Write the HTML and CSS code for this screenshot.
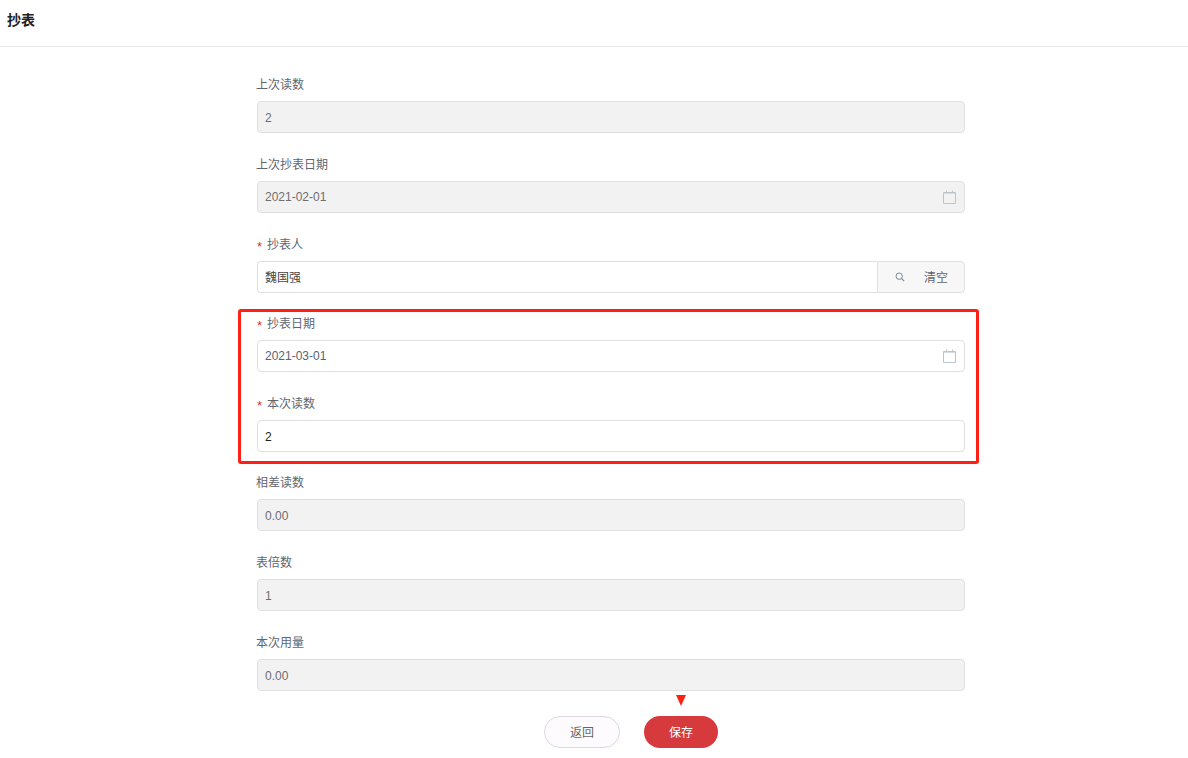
FILE: index.html
```html
<!DOCTYPE html>
<html lang="zh">
<head>
<meta charset="utf-8">
<title>抄表</title>
<link rel="stylesheet" href="styles.css">
</head>
<body>
<header class="page-header"><h1 class="page-title">抄表</h1></header>
<main class="form">
  <div class="field">
    <div class="label">上次读数</div>
    <div class="input disabled numeric">2</div>
  </div>
  <div class="field">
    <div class="label">上次抄表日期</div>
    <div class="input disabled"><span class="grow">2021-02-01</span>
      <svg class="cal" viewBox="0 0 13 14" width="13" height="14"><path d="M.5 2.5h12v11H.5zM3.5 .5v2M9.5 .5v2" fill="none" stroke="#bcc3cc"/><path d="M1 3.5h11" stroke="#d5dbe2"/></svg>
    </div>
  </div>
  <div class="field">
    <div class="label"><span class="star">*</span>抄表人</div>
    <div class="input-group">
      <div class="input joined">魏国强</div>
      <div class="addon">
        <svg class="search" viewBox="0 0 10 10" width="10" height="10"><circle cx="4.2" cy="4.2" r="3.2" fill="none" stroke="#7b8794"/><path d="M6.6 6.6l2.6 2.6" stroke="#7b8794" stroke-width="1.2"/></svg>
        <span class="clear">清空</span>
      </div>
    </div>
  </div>
  <div class="field">
    <div class="label"><span class="star">*</span>抄表日期</div>
    <div class="input"><span class="grow">2021-03-01</span>
      <svg class="cal" viewBox="0 0 13 14" width="13" height="14"><path d="M.5 2.5h12v11H.5zM3.5 .5v2M9.5 .5v2" fill="none" stroke="#bcc3cc"/><path d="M1 3.5h11" stroke="#d5dbe2"/></svg>
    </div>
  </div>
  <div class="field">
    <div class="label"><span class="star">*</span>本次读数</div>
    <div class="input strong numeric">2</div>
  </div>
  <div class="field">
    <div class="label">相差读数</div>
    <div class="input disabled numeric">0.00</div>
  </div>
  <div class="field">
    <div class="label">表倍数</div>
    <div class="input disabled numeric">1</div>
  </div>
  <div class="field last">
    <div class="label">本次用量</div>
    <div class="input disabled numeric">0.00</div>
  </div>
  <div class="actions">
    <button class="btn btn-back" type="button">返回</button>
    <button class="btn btn-save" type="button">保存</button>
  </div>
</main>
<div class="highlight"></div>
<div class="arrow"></div>
</body>
</html>
```
FILE: styles.css
```css
* { box-sizing: border-box; }
html, body { margin: 0; height: 100%; }
body {
  position: relative;
  background: #fff;
  color: #555;
  font-family: "Liberation Sans", "Noto Sans CJK SC", sans-serif;
  font-size: 12px;
  overflow: hidden;
}
.page-header {
  height: 47px;
  padding: 12px 0 0 7px;
  border-bottom: 1px solid #e8e8e8;
}
.page-title {
  margin: 0;
  font-size: 14px;
  line-height: 17px;
  font-weight: 700;
  color: #222;
}
.form {
  width: 708px;
  margin-left: 257px;
  padding-top: 27.45px;
}
.field { margin-bottom: 20.6px; }
.field.last { margin-bottom: 25.35px; }
.label {
  height: 22px;
  line-height: 22px;
  margin-bottom: 5px;
  margin-left: -1px;
  color: #5f6670;
}
.star {
  display: inline-block;
  width: 11px;
  padding-left: 1px;
  color: #e0301e;
  font-weight: 400;
  font-size: 13px;
  vertical-align: -2px;
}
.input {
  display: flex;
  align-items: center;
  height: 32px;
  padding: 0 8px 0 7px;
  border: 1px solid #e0e0e0;
  border-radius: 4px;
  background: #fff;
  color: #5a6270;
}
.input.numeric { padding-top: 2px; }
.input.disabled { background: #f2f2f2; color: #6e6e6e; }
.input.strong { color: #222; }
.grow { flex: 1; }
.input-group { display: flex; }
.input.joined {
  flex: 1;
  border-radius: 4px 0 0 4px;
  border-right: 0;
  color: #444;
}
.addon {
  display: flex;
  align-items: center;
  width: 88px;
  height: 32px;
  padding-left: 17px;
  border: 1px solid #e0e0e0;
  border-radius: 0 4px 4px 0;
  background: #f7f7f7;
}
.clear { margin-left: 19px; color: #5f6670; }
.actions { display: flex; gap: 24px; margin-left: 287px; }
.btn {
  height: 32px;
  border-radius: 16px;
  font-family: inherit;
  font-size: 12px;
  padding: 0;
}
.btn-back {
  width: 76px;
  border: 1px solid #dcd8e2;
  background: #fdfbfe;
  color: #666;
}
.btn-save {
  width: 74px;
  border: 0;
  background: #d63a3c;
  color: #fff;
}
.highlight {
  position: absolute;
  left: 238px;
  top: 309px;
  width: 741px;
  height: 155px;
  border: 3px solid #ff2015;
  border-radius: 3px;
}
.arrow {
  position: absolute;
  left: 676px;
  top: 695px;
  width: 0;
  height: 0;
  border-left: 5.5px solid transparent;
  border-right: 5.5px solid transparent;
  border-top: 11px solid #ff2015;
}
```
